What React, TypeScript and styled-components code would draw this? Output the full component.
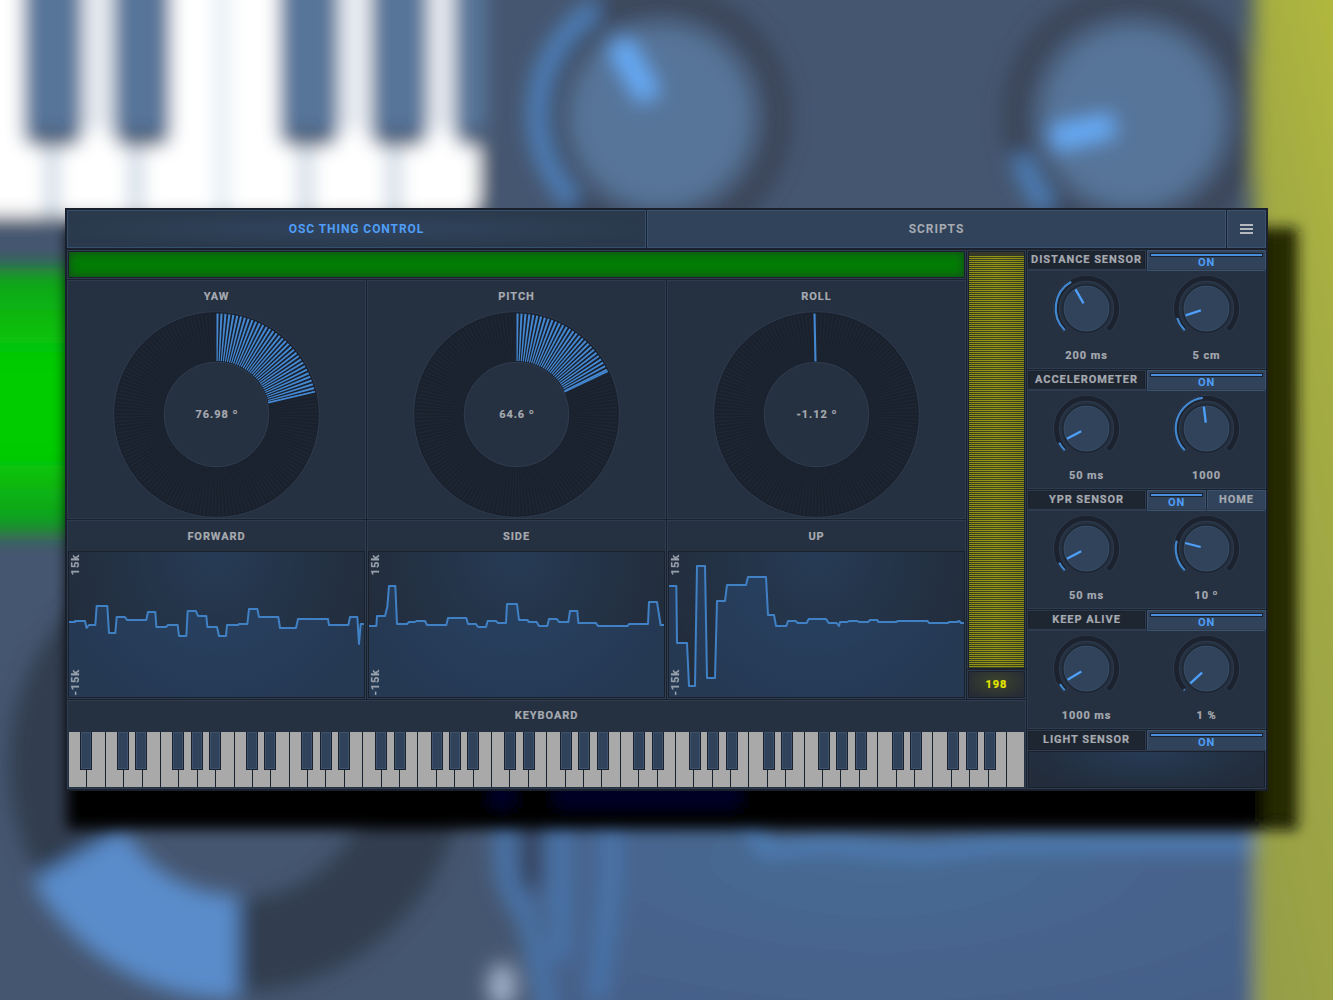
import React from "react";
import styled, { createGlobalStyle, css } from "styled-components";

const c = {
  edge: "#1a212d",
  panel: "#253040",
  line: "#2e3c4f",
  raised: "#30435b",
  raisedLine: "#3c5370",
  text: "#a6aab0",
  blue: "#4f9ef8",
  wave: "#4080c4",
};

const GlobalStyle = createGlobalStyle`
  body { margin: 0; background: #45566f; overflow: hidden; }
  * { box-sizing: border-box; }
`;

const Stage = styled.main`
  display: grid;
  width: 1333px;
  height: 1000px;
  overflow: hidden;
  font: 700 11px/13px Roboto, "Liberation Sans", sans-serif;
  letter-spacing: 0.94px;
  -webkit-text-stroke: 0.2px currentColor;
  color: ${c.text};
`;

const Backdrop = styled.svg`
  grid-area: 1 / 1;
  display: block;
`;

const Window = styled.section`
  grid-area: 1 / 1;
  position: relative;
  display: flex;
  flex-direction: column;
  gap: 2px;
  width: 1203px;
  height: 583px;
  margin: 208px 0 0 65px;
  padding: 2px;
  background: ${c.edge};
`;

const Tabs = styled.nav`
  display: grid;
  grid-template-columns: 579px 579px 39px;
  gap: 1px;
  height: 38px;
`;

const Tab = styled.div<{ $active?: boolean }>`
  display: flex;
  align-items: center;
  justify-content: center;
  border: 1px solid ${c.raisedLine};
  background: ${c.raised};
  font-size: 12px;
  -webkit-text-stroke: 0;
  ${(p) =>
    p.$active &&
    css`
      color: ${c.blue};
      border-color: #34506f;
      background: radial-gradient(ellipse at center, #30445e 0%, #2a3a4c 75%);
    `}
`;

const Body = styled.div`
  display: grid;
  grid-template-columns: 959px 239px;
  gap: 1px;
  height: 539px;
`;

const Column = styled.div`
  display: flex;
  flex-direction: column;
  gap: 1px;
  min-width: 0;
`;

const Upper = styled.div`
  display: grid;
  grid-template-columns: 899px 59px;
  gap: 1px;
  height: 449px;
`;

const Triple = styled.div<{ $h: number }>`
  display: grid;
  grid-template-columns: repeat(3, 299px);
  gap: 1px;
  height: ${(p) => p.$h}px;
`;

const Cell = styled.div<{ $h?: number }>`
  display: flex;
  flex-direction: column;
  align-items: center;
  border: 1px solid ${c.line};
  background: ${c.panel};
  ${(p) => p.$h && `height: ${p.$h}px;`}
`;

const Title = styled.div<{ $raise?: boolean }>`
  display: flex;
  align-items: center;
  justify-content: center;
  height: 30px;
  flex: none;
  ${(p) => p.$raise && "padding-bottom: 2px;"}
`;

const inset = css`
  flex: 1;
  align-self: stretch;
  border: 1px solid ${c.edge};
`;

const Lamp = styled.div`
  ${inset}
  background: #037c05;
  box-shadow: inset 0 0 9px 1px #164d1c;
`;

const Meter = styled.div`
  ${inset}
  padding-top: 4px;
  background: linear-gradient(#393a2a, #303824 6px);
`;

const MeterFill = styled.div`
  height: 412px;
  background: linear-gradient(90deg, transparent, rgba(190, 190, 20, 0.12), transparent),
    repeating-linear-gradient(#908f17 0 1px, #343c20 1px 2px);
`;

const Readout = styled.div`
  ${inset}
  display: flex;
  align-items: center;
  justify-content: center;
  color: #e6e600;
  background: radial-gradient(ellipse at 50% 40%, #3e432c, #252c35 85%);
`;

const DialBox = styled.div`
  display: grid;
  place-items: center;
  width: 207px;
  height: 207px;
  flex: none;
  > * { grid-area: 1 / 1; }
`;

const DialValue = styled.span`
  padding-left: 1px;
`;

const Plot = styled.div`
  ${inset}
  position: relative;
  background: radial-gradient(ellipse 55% 120% at 50% 0%, #263b55, #222c3b);
`;

const PlotSvg = styled.svg`
  display: block;
  width: 100%;
  height: 100%;
`;

const AxisLabel = styled.span<{ $low?: boolean }>`
  position: absolute;
  left: 0;
  ${(p) => (p.$low ? "bottom: 1px;" : "top: 2px;")}
  writing-mode: vertical-rl;
  transform: rotate(180deg);
  color: #98a1ab;
`;

const Keys = styled.div`
  display: flex;
  width: 955px;
  height: 55px;
  margin-top: 1px;
`;

const WhiteKey = styled.div`
  position: relative;
  flex: 1;
  background: #a9a9a9;
  &:not(:last-child) { border-right: 1px solid #17222f; }
`;

const BlackKey = styled.div<{ $over: number }>`
  position: absolute;
  z-index: 1;
  right: ${(p) => -p.$over}px;
  top: 0;
  width: 12px;
  height: 38px;
  padding: 0 1px 3px;
  background: ${c.edge};
  &::before {
    content: "";
    display: block;
    height: 100%;
    border: 1px solid #3c526f;
    background: ${c.raised};
  }
`;

const Module = styled.section`
  display: flex;
  flex-direction: column;
  height: 119px;
  background: ${c.panel};
`;

const ModuleHead = styled.header`
  display: grid;
  grid-template-columns: 119px 1fr;
  gap: 1px;
  height: 19px;
  background: ${c.edge};
`;

const HeadLabel = styled.div`
  display: flex;
  align-items: center;
  justify-content: center;
  padding-bottom: 2px;
  border: 1px solid ${c.line};
  background: #1e2632;
  box-shadow: inset 0 0 0 1px ${c.edge};
  white-space: nowrap;
`;

const Buttons = styled.div`
  display: grid;
  grid-auto-flow: column;
  grid-auto-columns: minmax(0, 1fr);
  gap: 1px;
`;

const Button = styled.div<{ $on?: boolean }>`
  display: flex;
  flex-direction: column;
  align-items: center;
  justify-content: center;
  padding-bottom: 2px;
  border: 1px solid ${c.raisedLine};
  background: ${c.raised};
  ${(p) =>
    p.$on &&
    css`
      justify-content: flex-start;
      padding: 2px;
      line-height: 11px;
      -webkit-text-stroke: 0;
      color: ${c.blue};
    `}
`;

const Led = styled.i`
  align-self: stretch;
  flex: none;
  height: 4px;
  border: 1px solid ${c.edge};
  background: #4a8dd8;
`;

const Knobs = styled.div`
  display: grid;
  grid-template-columns: 1fr 1fr;
  gap: 3px;
  flex: 1;
  border: 1px solid ${c.line};
`;

const KnobCell = styled.div`
  display: flex;
  flex-direction: column;
  align-items: center;
  justify-content: space-between;
  padding: 4px 0 6px;
`;

const polar = (r: number, deg: number, o: number) => {
  const a = (deg * Math.PI) / 180;
  return [o + r * Math.sin(a), o - r * Math.cos(a)];
};

const arc = (r: number, from: number, to: number, o: number) => {
  const [x1, y1] = polar(r, from, o);
  const [x2, y2] = polar(r, to, o);
  return `M${x1} ${y1}A${r} ${r} 0 ${to - from > 180 ? 1 : 0} 1 ${x2} ${y2}`;
};

function Knob({ angle, value }: { angle: number; value: string }) {
  const o = 34.5;
  const [x1, y1] = polar(22, angle, o);
  const [x2, y2] = polar(6, angle, o);
  return (
    <KnobCell>
      <svg width="69" height="69" viewBox="0 0 69 69" fill="none">
        <path d={arc(30.2, -136.5, 136.5, o)} stroke={c.line} strokeWidth="6.8" />
        <path d={arc(30.2, -135, 135, o)} stroke="#1c232f" strokeWidth="5" />
        {angle > -134 && <path d={arc(30.8, -135, angle, o)} stroke="#4387cf" strokeWidth="2.2" />}
        <circle cx={o} cy={o} r="23.6" stroke="#1e2734" strokeWidth="1.6" />
        <circle cx={o} cy={o} r="22.4" fill={c.raised} stroke="#3a516c" strokeWidth="0.9" />
        <path d={`M${x1} ${y1}L${x2} ${y2}`} stroke="#4fa0fa" strokeWidth="2.3" />
      </svg>
      <span>{value}</span>
    </KnobCell>
  );
}

function Dial({ angle, value }: { angle: number; value: string }) {
  const o = 103.5;
  const step = 2.25;
  const spokes = Array.from({ length: 160 }, (_, i) => i * step);
  const lit = spokes.filter((s) => s < angle);
  const wedge = (a: number, w: number) => {
    const p = [polar(53.5, a, o), polar(101, a, o), polar(101, a + w, o), polar(53.5, a + w, o)];
    return `M${p.map((q) => q.map((n) => n.toFixed(2)).join(" ")).join("L")}Z`;
  };
  const ray = (a: number) => {
    const [x1, y1] = polar(53, a, o);
    const [x2, y2] = polar(101, a, o);
    return `M${x1} ${y1}L${x2} ${y2}`;
  };
  return (
    <DialBox>
      <svg width="207" height="207" fill="none">
        <circle cx={o} cy={o} r="77.7" stroke="#1a212d" strokeWidth="50.4" />
        <path d={spokes.map((s) => wedge(s, 1.1)).join("")} fill="#1d2633" />
        <path d={lit.map((s) => wedge(s, Math.min(1.2, angle - s))).join("")} fill="#4488d2" />
        <path d={ray(angle)} stroke="#4488d2" strokeWidth={angle > 0 ? 1.7 : 2.1} />
        <circle cx={o} cy={o} r="102.9" stroke={c.line} />
        <circle cx={o} cy={o} r="52.3" stroke={c.line} />
      </svg>
      <DialValue>{value}</DialValue>
    </DialBox>
  );
}

function Wave({ points }: { points: string }) {
  return (
    <Plot>
      <PlotSvg viewBox="27 156 885 435" preserveAspectRatio="none" fill="none">
        <path d={`M${points}V591H27Z`} fill="#2f5f9a" fillOpacity="0.25" />
        <path d={`M${points}`} stroke={c.wave} strokeWidth="6" strokeLinejoin="round" />
      </PlotSvg>
      <AxisLabel>15k</AxisLabel>
      <AxisLabel $low>-15k</AxisLabel>
    </Plot>
  );
}

const waves = [
  {
    name: "FORWARD",
    d: "27 366L45 366L45 363L75 363L80 384L87 375L106 375L110 318L142 318L147 399L166 399L170 351L195 351L201 360L259 360L264 336L286 336L289 381L318 381L324 375L353 375L357 408L379 408L383 333L408 333L414 348L439 348L442 381L471 381L477 408L498 408L501 375L534 375L537 372L562 372L567 327L592 327L597 351L655 351L660 384L708 384L714 357L804 357L807 375L865 375L870 351L892 351L897 432L902 372L912 372",
  },
  {
    name: "SIDE",
    d: "27 378L49 378L51 348L75 348L82 320L87 258L106 258L111 372L141 372L147 366L165 366L170 363L195 363L201 375L259 375L264 354L319 354L324 372L348 372L354 381L378 381L383 363L408 363L414 369L438 369L441 312L471 312L477 360L502 360L507 366L530 366L537 378L562 378L567 357L591 357L597 366L625 366L630 333L652 333L655 369L708 369L714 378L803 378L807 372L864 372L867 306L891 306L902 375L912 375",
  },
  {
    name: "UP",
    d: "27 258L49 258L51 429L81 429L87 558L105 558L111 198L135 198L141 534L165 534L171 303L195 303L201 255L258 255L264 231L318 231L324 345L342 345L348 378L379 378L384 363L407 363L413 369L440 369L446 357L498 357L506 369L530 369L537 378L540 366L562 366L567 363L592 363L597 366L624 366L630 360L652 360L655 366L708 366L714 363L803 363L807 369L864 369L867 366L890 366L898 363L903 369L912 369",
  },
];

const modules = [
  { name: "DISTANCE SENSOR", knobs: [[-30, "200 ms"], [-108, "5 cm"]] },
  { name: "ACCELEROMETER", knobs: [[-117.5, "50 ms"], [-7, "1000"]] },
  { name: "YPR SENSOR", home: true, knobs: [[-117.5, "50 ms"], [-75.5, "10 º"]] },
  { name: "KEEP ALIVE", knobs: [[-120.5, "1000 ms"], [-132.5, "1 %"]] },
] as { name: string; home?: boolean; knobs: [number, string][] }[];

function Head({ name, home }: { name: string; home?: boolean }) {
  return (
    <ModuleHead>
      <HeadLabel>{name}</HeadLabel>
      <Buttons>
        <Button $on>
          <Led />
          ON
        </Button>
        {home && <Button>HOME</Button>}
      </Buttons>
    </ModuleHead>
  );
}

function Scenery() {
  return (
    <Backdrop width="1333" height="1000" viewBox="0 0 1333 1000">
      <defs>
        <filter id="soft" x="-10%" y="-10%" width="120%" height="120%">
          <feGaussianBlur stdDeviation="10" />
        </filter>
        <filter id="keys" x="-10%" y="-10%" width="120%" height="120%">
          <feGaussianBlur stdDeviation="9" />
        </filter>
        <filter id="shade" x="-10%" y="-10%" width="120%" height="120%">
          <feGaussianBlur stdDeviation="7" />
        </filter>
        <linearGradient id="yellow" x1="0.8" y1="0" x2="0.3" y2="1">
          <stop offset="0" stopColor="#b5bb3c" />
          <stop offset="0.4" stopColor="#a3ab43" />
          <stop offset="1" stopColor="#969f46" />
        </linearGradient>
        <linearGradient id="green" x1="0" y1="0" x2="0" y2="1">
          <stop offset="0" stopColor="#10a01c" />
          <stop offset="0.35" stopColor="#04cc04" />
          <stop offset="0.7" stopColor="#04cc04" />
          <stop offset="1" stopColor="#149822" />
        </linearGradient>
        <radialGradient id="plot" cx="0.5" cy="0.3" r="0.7">
          <stop offset="0" stopColor="#476a93" />
          <stop offset="1" stopColor="#455f88" />
        </radialGradient>
      </defs>
      <rect width="1333" height="1000" fill="#45566f" />
      <g filter="url(#keys)">
        <rect x="-40" y="-40" width="1420" height="1080" fill="#45566f" />
        <rect x="-60" y="-40" width="539" height="256" rx="18" fill="#fff" />
        <path d="M222-40V216" stroke="#e2ebf2" strokeWidth="14" />
        <path d="M52 130V216M136 130V216M306 130V216M394 130V216" stroke="#cdd9e5" strokeWidth="15" />
        <path d="M98-40V130M350-40V130M440-40V130" stroke="#e8ecf2" strokeWidth="28" />
        <g fill="#567599" stroke="#567599" strokeWidth="2">
          {[[24, 58], [114, 56], [280, 58], [371, 56], [455, 45]].map(([x, w]) => (
            <rect key={x} x={x} y="-40" width={w} height="186" rx="14" />
          ))}
        </g>
        <path d="M34 138H72M124 138H160M290 138H328M381 138H417M465 136H490" stroke="#48586f" strokeWidth="14" />
        <rect x="486" y="-40" width="40" height="290" fill="#45566f" />
      </g>
      <g filter="url(#soft)">
        <rect x="-60" y="268" width="240" height="266" fill="url(#green)" />
        <circle cx="236" cy="765" r="181" fill="none" stroke="#323e50" strokeWidth="92" />
        <path d="M32 881A234 234 0 0 0 238 1000V895A130 130 0 0 1 124 828Z" fill="#5a8ccb" />
        {[661, 1133].map((x) => (
          <g key={x}>
            <circle cx={x} cy="117" r="119" fill="none" stroke="#3a4559" strokeWidth="24" />
            <circle cx={x} cy="117" r="91" fill="#567599" />
          </g>
        ))}
        <path d="M597 8A124 124 0 0 0 574 202" fill="none" stroke="#4d80ba" strokeWidth="20" />
        <path d="M1021 156Q1029 184 1048 208" fill="none" stroke="#4d80ba" strokeWidth="20" />
        <path d="M617 40L650 98M1051 139L1113 125" stroke="#68adfa" strokeWidth="23" />
        <path d="M500 780L505 880L545 920V1040H1256V848H760L735 780Z" fill="url(#plot)" />
        <path d="M503 780V860Q505 890 528 920L552 1040M611 780V880L597 1000M560 780V960" fill="none" stroke="#4a75aa" strokeWidth="19" />
        <path d="M531 780V888" stroke="#303e56" strokeWidth="19" />
        <path d="M740 790L765 848L830 842L920 850L1000 842L1256 842" fill="none" stroke="#4d80ba" strokeWidth="16" />
        <ellipse cx="502" cy="986" rx="14" ry="23" fill="#a3b2c9" />
        <rect x="1254" y="-40" width="120" height="1080" fill="url(#yellow)" />
      </g>
      <g filter="url(#shade)">
        <path d="M67 228H1297V829H67Z" fill="#000005" />
        <path d="M1264 232H1293V822H1264Z" fill="#252b00" />
        <path d="M490 780H514V808H490ZM555 780H740V808H555Z" fill="#000028" />
      </g>
    </Backdrop>
  );
}

export default function App() {
  return (
    <Stage>
      <GlobalStyle />
      <Scenery />
      <Window>
        <Tabs>
          <Tab $active>OSC THING CONTROL</Tab>
          <Tab>SCRIPTS</Tab>
          <Tab>
            <svg width="13" height="11" stroke="#b4b9bf" strokeWidth="2">
              <path d="M0 1H13M0 5H13M0 9H13" />
            </svg>
          </Tab>
        </Tabs>
        <Body>
          <Column>
            <Upper>
              <Column>
                <Cell $h={29}>
                  <Lamp />
                </Cell>
                <Triple $h={239}>
                  {([["YAW", 76.98, "76.98 º"], ["PITCH", 64.6, "64.6 º"], ["ROLL", -1.12, "-1.12 º"]] as [string, number, string][]).map(
                    ([name, angle, value]) => (
                      <Cell key={name}>
                        <Title>{name}</Title>
                        <Dial angle={angle} value={value} />
                      </Cell>
                    )
                  )}
                </Triple>
                <Triple $h={179}>
                  {waves.map((w) => (
                    <Cell key={w.name}>
                      <Title>{w.name}</Title>
                      <Wave points={w.d} />
                    </Cell>
                  ))}
                </Triple>
              </Column>
              <Column>
                <Cell $h={419}>
                  <Meter>
                    <MeterFill />
                  </Meter>
                </Cell>
                <Cell $h={29}>
                  <Readout>198</Readout>
                </Cell>
              </Column>
            </Upper>
            <Cell $h={89}>
              <Title $raise>KEYBOARD</Title>
              <Keys>
                {Array.from({ length: 52 }, (_, i) => (
                  <WhiteKey key={i}>
                    {i < 51 && ![1, 4].includes(i % 7) && <BlackKey $over={5.6 + i * 0.058} />}
                  </WhiteKey>
                ))}
              </Keys>
            </Cell>
          </Column>
          <Column>
            {modules.map((m) => (
              <Module key={m.name}>
                <Head name={m.name} home={m.home} />
                <Knobs>
                  {m.knobs.map(([angle, value], i) => (
                    <Knob key={i} angle={angle} value={value} />
                  ))}
                </Knobs>
              </Module>
            ))}
            <Head name="LIGHT SENSOR" />
            <Cell $h={39}>
              <Plot />
            </Cell>
          </Column>
        </Body>
      </Window>
    </Stage>
  );
}
